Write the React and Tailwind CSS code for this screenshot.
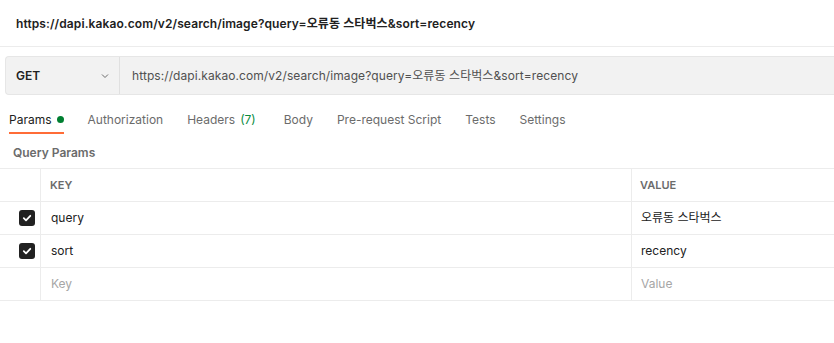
import React from 'react';

const tabs = [
    { label: 'Params', active: true, dot: true },
    { label: 'Authorization' },
    { label: 'Headers', count: '(7)', extra: 'mr-1' },
    { label: 'Body' },
    { label: 'Pre-request Script' },
    { label: 'Tests' },
    { label: 'Settings' },
];

const rows = [
    { key: 'query', value: '오류동 스타벅스', checked: true },
    { key: 'sort', value: 'recency', checked: true },
    { key: 'Key', value: 'Value', placeholder: true },
];

const Checkbox = () => (
    <div className="w-4 h-4 rounded-[3px] bg-[#212121] flex items-center justify-center">
        <svg width="10" height="10" viewBox="0 0 10 10" fill="none">
            <path d="M1.8 5.2 L4 7.3 L8.3 2.8" stroke="white" strokeWidth="1.8" strokeLinecap="round" strokeLinejoin="round" />
        </svg>
    </div>
);

const App = () => {
    return (
        <div className="w-[834px] h-[343px] bg-white overflow-hidden text-[12px]" style={{ fontFamily: 'Inter, "Noto Sans CJK KR", sans-serif' }}>
            {/* request title */}
            <div className="h-[47px] border-b border-[#ececec] flex items-center pl-4 pt-px">
                <span className="font-semibold text-[#212121] text-[12px] tracking-[0.1px]">
                    https://dapi.kakao.com/v2/search/image?query=오류동 스타벅스&sort=recency
                </span>
            </div>

            {/* url bar */}
            <div className="pl-[5px] pt-[9px]">
                <div className="h-[39px] flex bg-[#f2f2f2] border border-r-0 border-[#e6e6e6] rounded-l-[4px]">
                    <div className="w-[114px] flex items-center justify-between pl-[10px] pr-[9px] border-r border-[#e0e0e0]">
                        <span className="font-semibold text-[#212121]">GET</span>
                        <svg width="10" height="10" viewBox="0 0 10 10" fill="none">
                            <path d="M2 3.5 L5 6.5 L8 3.5" stroke="#6b6b6b" strokeWidth="1" />
                        </svg>
                    </div>
                    <div className="flex items-center pl-[12px] text-[#505050] tracking-[0.08px]">
                        https://dapi.kakao.com/v2/search/image?query=오류동 스타벅스&sort=recency
                    </div>
                </div>
            </div>

            {/* tabs */}
            <div className="flex pl-[9px] mt-[13px] gap-6">
                {tabs.map((t) => (
                    <div key={t.label} className={`h-[26px] flex items-center gap-[5px] border-b-2 pb-[1px] ${t.extra || ''} ${t.active ? 'border-[#ff6c37] text-[#212121]' : 'border-transparent text-[#6b6b6b]'}`}>
                        <span>{t.label}</span>
                        {t.count && <span className="text-[#0a8c3f]">{t.count}</span>}
                        {t.dot && <span className="w-[7px] h-[7px] rounded-full bg-[#007f31]" />}
                    </div>
                ))}
            </div>

            {/* query params */}
            <div className="pl-[13px] pt-[10px] pb-[6px] font-semibold text-[#6b6b6b]">Query Params</div>

            <div className="border-t border-[#ececec]">
                <div className="h-[33px] flex border-b border-[#ececec] font-semibold text-[#6b6b6b] text-[11px]">
                    <div className="w-[41px] border-r border-[#ececec]" />
                    <div className="w-[591px] border-r border-[#ececec] flex items-center pl-[9px]">KEY</div>
                    <div className="flex-1 flex items-center pl-[8px]">VALUE</div>
                </div>
                {rows.map((r) => (
                    <div key={r.key} className={`h-[33px] flex border-b border-[#ececec] ${r.placeholder ? 'text-[#a6a6a6]' : 'text-[#212121]'}`}>
                        <div className="w-[41px] border-r border-[#ececec] flex items-center justify-end pr-[5px]">
                            {r.checked && <Checkbox />}
                        </div>
                        <div className="w-[591px] border-r border-[#ececec] flex items-center pl-[10px]">{r.key}</div>
                        <div className="flex-1 flex items-center pl-[9px]">{r.value}</div>
                    </div>
                ))}
            </div>
        </div>
    );
};

export default App;
